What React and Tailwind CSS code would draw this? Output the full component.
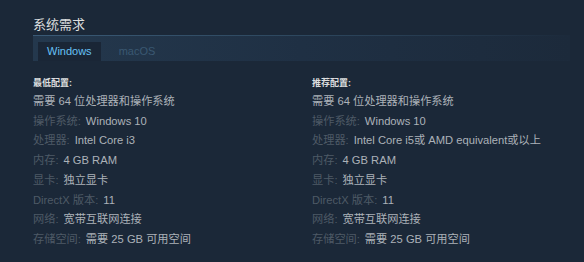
import React from "react";

const minSpec = [
  ["操作系统:", "Windows 10"],
  ["处理器:", "Intel Core i3"],
  ["内存:", "4 GB RAM"],
  ["显卡:", "独立显卡"],
  ["DirectX 版本:", "11"],
  ["网络:", "宽带互联网连接"],
  ["存储空间:", "需要 25 GB 可用空间"],
];

const recSpec = [
  ["操作系统:", "Windows 10"],
  ["处理器:", "Intel Core i5或 AMD equivalent或以上"],
  ["内存:", "4 GB RAM"],
  ["显卡:", "独立显卡"],
  ["DirectX 版本:", "11"],
  ["网络:", "宽带互联网连接"],
  ["存储空间:", "需要 25 GB 可用空间"],
];

function SpecColumn({ title, rows, className }) {
  return (
    <div className={className}>
      <div className="text-[9px] font-bold text-[#dcdedf] leading-[14px]">{title}</div>
      <div className="mt-[2px] text-[11.2px] leading-[19.7px]">
        <div className="text-[#acb2b8]">需要 64 位处理器和操作系统</div>
        {rows.map(([label, value]) => (
          <div key={label} className="whitespace-nowrap">
            <span className="text-[#4e5a66]">{label}</span>
            <span className="text-[#acb2b8] ml-[5px]">{value}</span>
          </div>
        ))}
      </div>
    </div>
  );
}

export default function App() {
  return (
    <div
      className="w-[584px] h-[262px] bg-[#1b2838] overflow-hidden pt-[17px] pl-[33px] pr-[14px]"
      style={{ fontFamily: '"Liberation Sans", Arial, "Noto Sans CJK SC", sans-serif' }}
    >
      <h2 className="text-[13px] leading-[16px] text-[#dcdedf] font-normal">系统需求</h2>

      {/* tabs bar */}
      <div className="mt-[2px] h-[26px] relative bg-gradient-to-r from-[#24384d] via-[#1f3044] to-[#1c2a3b] flex items-end pl-[5px]">
        <div className="absolute top-0 left-0 right-0 h-px bg-gradient-to-r from-[#3a5a76] via-[#2d475e] to-transparent" />
        <div className="h-[19px] px-[9px] bg-[#1a2636] text-[#67c1f5] text-[11px] flex items-center">
          Windows
        </div>
        <div className="h-[19px] px-[18px] text-[#3a5872] text-[11px] flex items-center">
          macOS
        </div>
      </div>

      <div className="flex mt-[15px]">
        <SpecColumn title="最低配置:" rows={minSpec} className="w-[279px]" />
        <SpecColumn title="推荐配置:" rows={recSpec} className="flex-1" />
      </div>
    </div>
  );
}
